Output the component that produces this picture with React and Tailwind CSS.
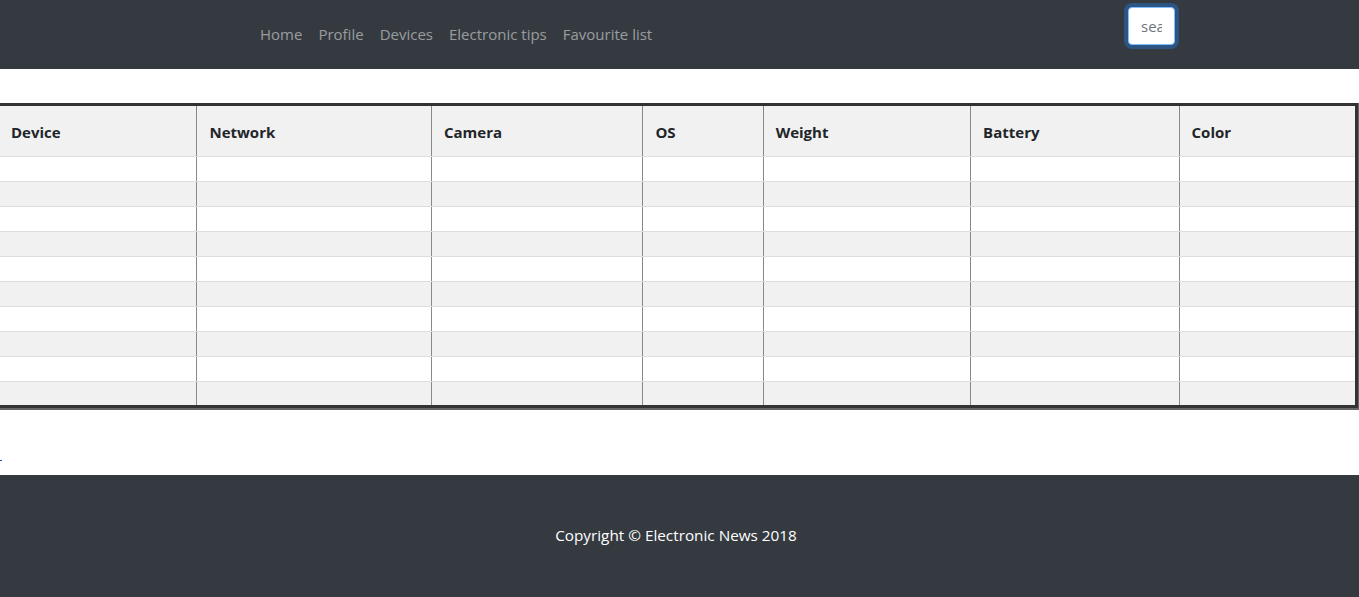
import React from "react";

const columns = [
  { name: "Device", w: "w-[199px]" },
  { name: "Network", w: "w-[234px]" },
  { name: "Camera", w: "w-[211px]" },
  { name: "OS", w: "w-[120px]" },
  { name: "Weight", w: "w-[207px]" },
  { name: "Battery", w: "w-[208px]" },
  { name: "Color", w: "w-[177px]" },
];

const links = ["Home", "Profile", "Devices", "Electronic tips", "Favourite list"];

export default function App() {
  const rows = Array.from({ length: 10 });

  return (
    <div className="min-h-screen bg-white text-[#212529] font-['Open_Sans',sans-serif] overflow-hidden">
      {/* NAVBAR */}
      <nav className="h-[69px] bg-[#343a40] flex items-start">
        <ul className="flex items-center gap-4 ml-[260px] mt-[22px]">
          {links.map((l) => (
            <li key={l}>
              <a href="#" className="text-[15px] text-white/50 hover:text-white/75">
                {l}
              </a>
            </li>
          ))}
        </ul>
        <input
          placeholder="search"
          className="ml-auto mr-[184px] mt-[7px] w-[47px] h-[38px] rounded-[4px] bg-white border border-[#80bdff] px-3 text-[15px] text-[#495057] outline-none ring-4 ring-[#2a5d95]/80 placeholder:text-[#6c757d]"
        />
      </nav>

      {/* TABLE */}
      <div className="pt-[34px]">
        <table className="table-fixed border-collapse ml-[-4px] w-[1362px] border-[3px] border-[#333] shadow-[1px_1px_0_1px_#666]">
          <thead>
            <tr className="bg-[#f1f1f1] h-[52px]">
              {columns.map((c, i) => (
                <th
                  key={c.name}
                  className={`${c.w} text-left font-bold text-[15px] px-3 pt-[2px] border-b border-[#ddd] ${
                    i > 0 ? "border-l border-l-[#888]" : ""
                  }`}
                >
                  {c.name}
                </th>
              ))}
            </tr>
          </thead>
          <tbody>
            {rows.map((_, r) => (
              <tr key={r} className={`h-[25px] ${r % 2 === 1 ? "bg-[#f1f1f1]" : "bg-white"}`}>
                {columns.map((c, i) => (
                  <td
                    key={c.name}
                    className={`px-3 ${r < 9 ? "border-b border-[#ddd]" : ""} ${
                      i > 0 ? "border-l border-l-[#888]" : ""
                    }`}
                  ></td>
                ))}
              </tr>
            ))}
          </tbody>
        </table>
      </div>

      <div className="h-[67px] relative">
        <span className="absolute left-0 top-[52px] w-[2px] h-[1px] bg-[#2a5d95]"></span>
      </div>

      {/* FOOTER */}
      <footer className="h-[122px] bg-[#343a40] flex items-center justify-center pr-[7px]">
        <p className="text-white text-[15.3px] mt-[-2px]">Copyright © Electronic News 2018</p>
      </footer>
    </div>
  );
}
